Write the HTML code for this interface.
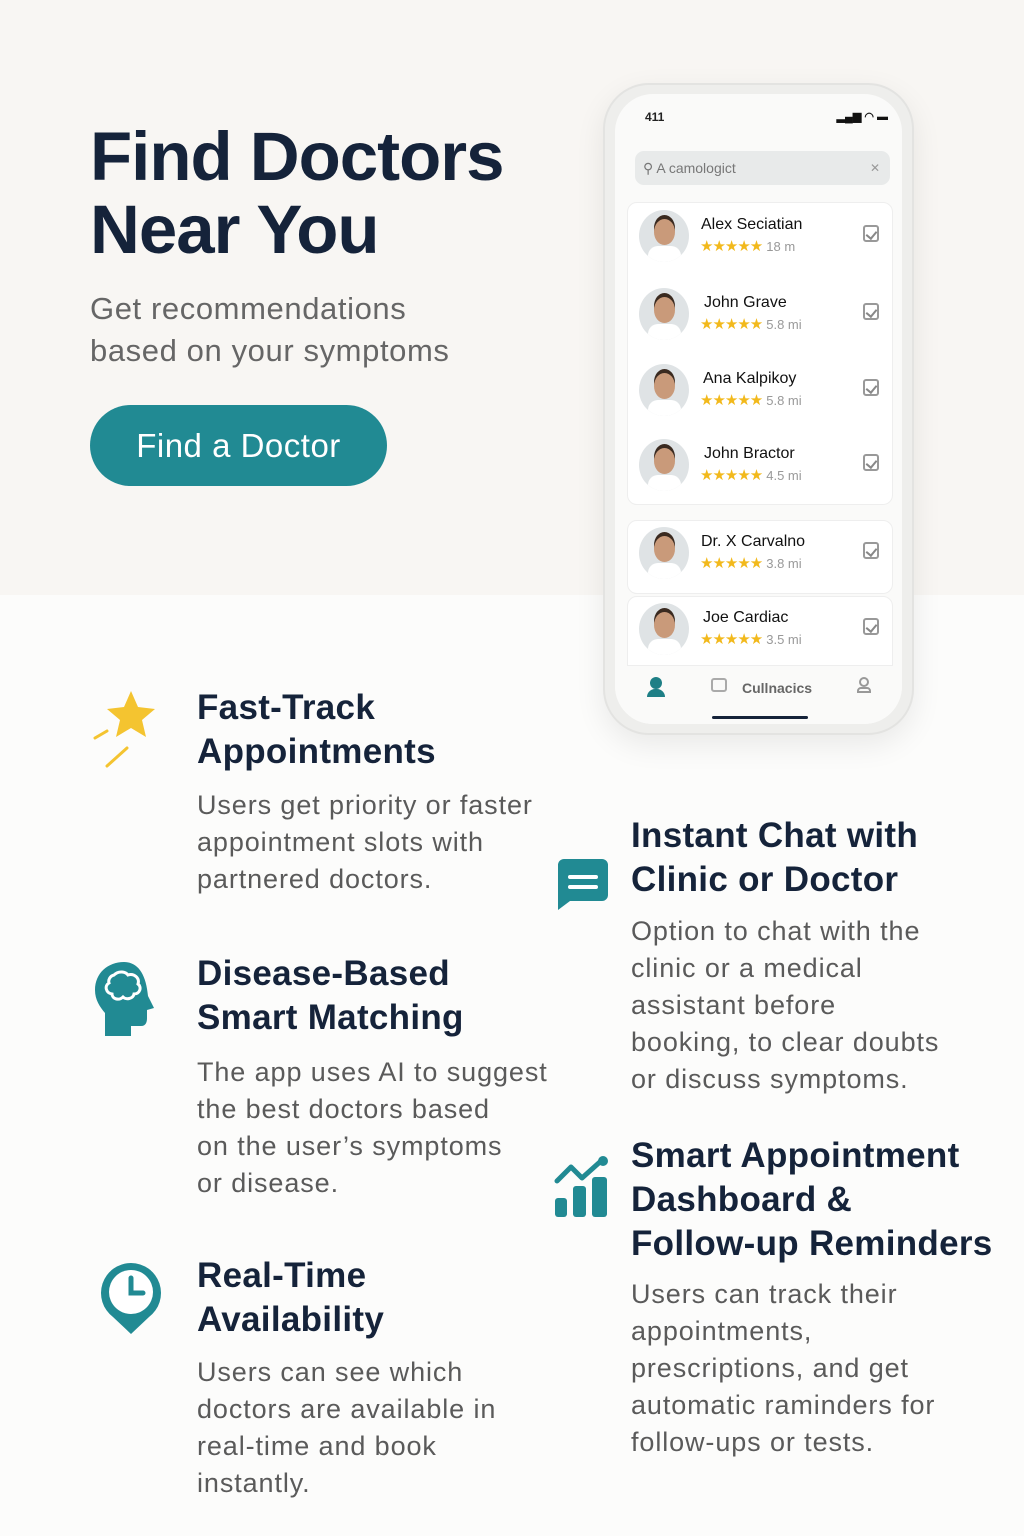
<!DOCTYPE html>
<html><head><meta charset="utf-8"><style>
*{margin:0;padding:0;box-sizing:border-box}
body{width:1024px;height:1536px;position:relative;background:#fcfcfb;font-family:"Liberation Sans",sans-serif;overflow:hidden}
.top{position:absolute;left:0;top:0;width:1024px;height:595px;background:#f8f6f3}
.abs{position:absolute}
h1{position:absolute;left:90px;top:120px;font-size:69px;line-height:73px;color:#15233a;letter-spacing:-1px;font-weight:700}
.sub{left:90px;top:288px;font-size:31px;line-height:42px;color:#666;letter-spacing:0.6px}
.btn{left:90px;top:405px;width:297px;height:81px;border-radius:41px;background:#218a93;color:#fff;font-size:33px;text-align:center;line-height:81px;letter-spacing:0.5px}
.h{position:absolute;font-size:35px;line-height:44px;font-weight:700;color:#15233a;letter-spacing:0.3px}
.p{position:absolute;font-size:27px;line-height:37px;color:#5a5a5a;letter-spacing:0.9px}
.phone{left:603px;top:83px;width:311px;height:652px;border-radius:46px;background:#eeeeec;box-shadow:0 10px 30px rgba(0,0,0,.08);border:2px solid #e3e3e1}
.scr{position:absolute;left:10px;top:9px;right:10px;bottom:9px;border-radius:38px;background:#fafaf9;overflow:hidden}
.row{position:absolute;left:22px;width:264px;height:76px}
.av{position:absolute;left:12px;top:12px;width:50px;height:52px;border-radius:50%;background:#dfe3e5;overflow:hidden}
.av:before{content:"";position:absolute;left:15px;top:9px;width:21px;height:26px;border-radius:50%;background:#c99a7a;box-shadow:0 -4px 0 #3a2a20}
.av:after{content:"";position:absolute;left:9px;top:36px;width:33px;height:20px;border-radius:10px 10px 0 0;background:#fff;border-bottom:6px solid #2a6fb0}
.nm{position:absolute;left:74px;top:18px;font-size:16px;color:#111}
.st{position:absolute;left:73px;top:39px;font-size:15px;color:#f2b91c;letter-spacing:-1px}
.st span{color:#999;letter-spacing:0;margin-left:4px;font-size:13px}
.ck{position:absolute;right:12px;top:27px;width:16px;height:17px;border:2px solid #999;border-radius:3px}
.ck:after{content:"";position:absolute;left:3px;top:2px;width:5px;height:8px;border:solid #888;border-width:0 2px 2px 0;transform:rotate(40deg)}
</style></head><body>
<div class="top"></div>
<h1>Find Doctors<br>Near You</h1>
<div class="abs sub">Get recommendations<br>based on your symptoms</div>
<div class="abs btn">Find a Doctor</div>

<div class="abs phone"><div class="scr">
 <div class="abs" style="left:30px;top:16px;font-size:12px;font-weight:700;color:#222">411</div>
 <div class="abs" style="right:14px;top:16px;font-size:11px;color:#111;font-weight:700">▂▄▆ ◠ ▬</div>
 <div class="abs" style="left:20px;top:57px;width:255px;height:34px;border-radius:9px;background:#e8eaea;font-size:14px;color:#777;line-height:34px;padding-left:8px">⚲ A camologict<span style="position:absolute;right:10px;font-size:12px;color:#999">✕</span></div>
 <div class="abs" style="left:12px;top:108px;width:266px;height:303px;background:#fff;border-radius:10px;border:1px solid #eee"></div>
 <div class="abs" style="left:12px;top:426px;width:266px;height:74px;background:#fff;border-radius:10px;border:1px solid #eee"></div>
 <div class="abs" style="left:12px;top:502px;width:266px;height:70px;background:#fff;border-radius:10px 10px 0 0;border:1px solid #eee"></div>
 <div class="row" style="top:104px;left:12px"><div class="av"></div><div class="nm">Alex Seciatian</div><div class="st">★★★★★<span>18 m</span></div><div class="ck"></div></div>
 <div class="row" style="top:182px;left:12px"><div class="av"></div><div class="nm" style="left:77px">John Grave</div><div class="st">★★★★★<span>5.8 mi</span></div><div class="ck"></div></div>
 <div class="row" style="top:258px;left:12px"><div class="av"></div><div class="nm" style="left:76px">Ana Kalpikoy</div><div class="st">★★★★★<span>5.8 mi</span></div><div class="ck"></div></div>
 <div class="row" style="top:333px;left:12px"><div class="av"></div><div class="nm" style="left:77px">John Bractor</div><div class="st">★★★★★<span>4.5 mi</span></div><div class="ck"></div></div>
 <div class="row" style="top:421px;left:12px"><div class="av"></div><div class="nm">Dr. X Carvalno</div><div class="st">★★★★★<span>3.8 mi</span></div><div class="ck"></div></div>
 <div class="row" style="top:497px;left:12px"><div class="av"></div><div class="nm" style="left:76px">Joe Cardiac</div><div class="st">★★★★★<span>3.5 mi</span></div><div class="ck"></div></div>
 <div class="abs" style="left:0;top:572px;width:291px;height:70px;background:#fafaf9"></div>
 <div class="abs" style="left:32px;top:583px;width:18px;height:20px"><div style="width:12px;height:12px;border-radius:50%;background:#1e7f86;margin:0 auto"></div><div style="width:18px;height:8px;border-radius:8px 8px 0 0;background:#1e7f86"></div></div>
 <div class="abs" style="left:96px;top:584px;width:16px;height:14px;border:2px solid #aaa;border-radius:3px"></div>
 <div class="abs" style="left:127px;top:586px;font-size:14px;font-weight:700;color:#666">Cullnacics</div>
 <div class="abs" style="left:242px;top:583px;width:14px;height:18px"><div style="width:10px;height:10px;border-radius:50%;border:2px solid #999;margin:0 auto"></div><div style="width:14px;height:6px;border:2px solid #999;border-radius:4px 4px 0 0"></div></div>
 <div class="abs" style="left:97px;top:622px;width:96px;height:3px;background:#15233a;border-radius:2px"></div>
</div></div>

<svg class="abs" style="left:90px;top:688px" width="72" height="84" viewBox="0 0 72 84"><path d="M41 3l7 16 17 2-13 11 4 17-15-9-15 9 4-17-13-11 17-2z" fill="#f4c430"/><path d="M5 50l12-7M17 78l20-18" stroke="#f4c430" stroke-width="3" stroke-linecap="round"/></svg>
<div class="h" style="left:197px;top:686px">Fast-Track<br>Appointments</div>
<div class="p" style="left:197px;top:787px">Users get priority or faster<br>appointment slots with<br>partnered doctors.</div>

<svg class="abs" style="left:94px;top:960px" width="66" height="78" viewBox="0 0 66 78"><path d="M30 2C14 2 1 13 1 30c0 10 5 17 10 23v23h26v-10h10c5 0 6-4 6-8v-8l7-2-6-12C52 14 44 2 30 2z" fill="#218a93"/><path d="M20 15c5-5 12-3 14 0 6-2 12 3 10 9 4 3 2 10-4 10-1 5-8 6-11 3-4 4-11 2-11-3-6-1-8-8-3-11-1-3 1-7 5-8z" fill="none" stroke="#fff" stroke-width="3"/></svg>
<div class="h" style="left:197px;top:952px">Disease-Based<br>Smart Matching</div>
<div class="p" style="left:197px;top:1054px">The app uses AI to suggest<br>the best doctors based<br>on the user’s symptoms<br>or disease.</div>

<svg class="abs" style="left:98px;top:1260px" width="66" height="76" viewBox="0 0 66 76"><path d="M33 3a30 30 0 0 0-18 54l18 17 18-17A30 30 0 0 0 33 3z" fill="#218a93"/><circle cx="33" cy="32" r="22" fill="#fff"/><path d="M33 18v15h12" stroke="#218a93" stroke-width="5" fill="none" stroke-linecap="round"/></svg>
<div class="h" style="left:197px;top:1254px">Real-Time<br>Availability</div>
<div class="p" style="left:197px;top:1354px">Users can see which<br>doctors are available in<br>real-time and book<br>instantly.</div>

<svg class="abs" style="left:556px;top:857px" width="54" height="55" viewBox="0 0 54 55"><path d="M8 2h38a6 6 0 0 1 6 6v30a6 6 0 0 1-6 6H14L2 53V8a6 6 0 0 1 6-6z" fill="#218a93"/><path d="M14 20h26M14 30h26" stroke="#fff" stroke-width="4" stroke-linecap="round"/></svg>
<div class="h" style="left:631px;top:814px">Instant Chat with<br>Clinic or Doctor</div>
<div class="p" style="left:631px;top:913px">Option to chat with the<br>clinic or a medical<br>assistant before<br>booking, to clear doubts<br>or discuss symptoms.</div>

<svg class="abs" style="left:553px;top:1155px" width="58" height="64" viewBox="0 0 58 64"><path d="M4 26l14-14 11 11L48 6" stroke="#218a93" stroke-width="5" fill="none" stroke-linecap="round" stroke-linejoin="round"/><circle cx="50" cy="6" r="5" fill="#218a93"/><rect x="2" y="43" width="12" height="19" rx="3" fill="#218a93"/><rect x="20" y="31" width="13" height="31" rx="3" fill="#218a93"/><rect x="39" y="22" width="15" height="40" rx="3" fill="#218a93"/></svg>
<div class="h" style="left:631px;top:1134px">Smart Appointment<br>Dashboard &amp;<br>Follow-up Reminders</div>
<div class="p" style="left:631px;top:1276px">Users can track their<br>appointments,<br>prescriptions, and get<br>automatic raminders for<br>follow-ups or tests.</div>
</body></html>
